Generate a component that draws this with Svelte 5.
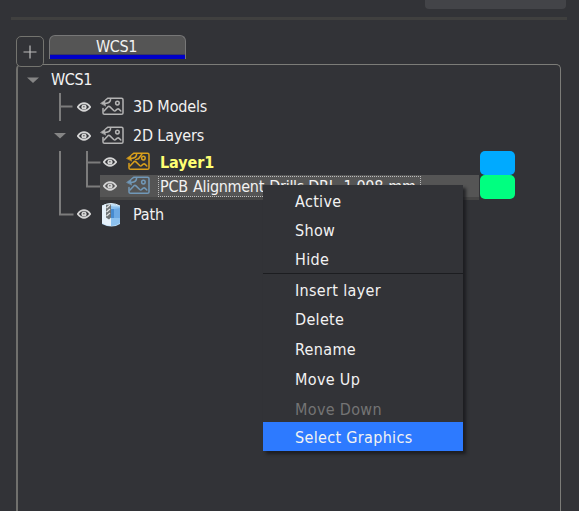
<script>
  const rows = [
    { label: 'WCS1', kind: 'root', h: 27 },
    { label: '3D Models', kind: 'branch', icon: 'image', tint: '#b4b4b4', h: 28, line: 'M32.5 0V28M33.5 13.5H45' },
    { label: '2D Layers', kind: 'branch', icon: 'image', tint: '#b4b4b4', h: 30, arrow: true },
    { label: 'Layer1', kind: 'leaf', icon: 'image', tint: '#daa01c', h: 24, color: '#00aaff', active: true, line: 'M32.5 0V24M59.5 0V24M60.5 11.5H73' },
    { label: 'PCB Alignment Drills.DRL_1.008 mm', kind: 'leaf', icon: 'image', tint: '#7198b8', h: 25, color: '#00ff80', selected: true, line: 'M32.5 0V25M59.5 0V11.5H73' },
    { label: 'Path', kind: 'branch', icon: 'path', h: 29, line: 'M32.5 0V14.5H46' }
  ];
  const menu = [
    { label: 'Active', h: 29 },
    { label: 'Show', h: 29 },
    { label: 'Hide', h: 28, end: true, low: true },
    { label: 'Insert layer', h: 29 },
    { label: 'Delete', h: 30 },
    { label: 'Rename', h: 30 },
    { label: 'Move Up', h: 30 },
    { label: 'Move Down', h: 27, disabled: true, low: true },
    { label: 'Select Graphics', h: 29, hover: true, low: true }
  ];
</script>

<main>
  <header><div class="field"></div></header>
  <div class="rule"></div>
  <nav>
    <button class="add" aria-label="Add"><svg width="14" height="14" viewBox="0 0 14 14"><path d="M7 .5v13M.5 7h13" stroke="#bcbcbc" stroke-width="1.2" /></svg></button>
    <div class="tab"><span>WCS1</span></div>
  </nav>
  <section>
    {#each rows as r}
      <div class="row {r.kind}" class:active={r.active} class:selected={r.selected} style:height="{r.h}px">
        <svg class="guide" viewBox="0 0 {r.kind === 'leaf' ? 73 : r.kind === 'root' ? 33 : 47} {r.h}" width={r.kind === 'leaf' ? 73 : r.kind === 'root' ? 33 : 47} height={r.h}>
          {#if r.line}<path d={r.line} transform="translate(9.5 0)" fill="none" stroke="#7c7c7c" stroke-width="2" />{/if}
          {#if r.kind === 'root'}<path d="M9 11.5h12l-6 5.5z" fill="#858585" />{/if}
          {#if r.arrow}<path d="M36 12h12l-6 5.5z" fill="#858585" />{/if}
        </svg>
        <div class="content">
          {#if r.kind !== 'root'}
            <svg class="eye" width="14" height="10" viewBox="0 0 14 10"><path d="M.7 5Q3.5 1.2 7 1.2T13.3 5Q10.5 8.8 7 8.8T.7 5z" fill="none" stroke="#d5d5d5" stroke-width="1.7" /><circle cx="7" cy="5" r="2.6" fill="#d5d5d5" /><circle cx="6.9" cy="4.8" r=".8" fill="#555" /></svg>
          {/if}
          {#if r.icon === 'image'}
            <svg class="icon" width="25" height="20" viewBox="0 0 25 20" fill="none" stroke={r.tint} stroke-width="1.5" stroke-linejoin="round" stroke-linecap="round">
              <path d="M5.5 3L8 1.2H21.5Q23 1.2 23 2.7V16Q23 17.3 21.5 17.3H4.5Q3 17.3 3 16V11.5" />
              <path d="M10.6 1.8Q10.8 6.2 5.2 6.5" />
              <path d="M.8 6.2L5 3.3Q4.6 6 5.5 8.8z" fill={r.tint} stroke-width=".6" />
              <path d="M4 14L8 9.7Q9 8.9 10 9.9L13.7 13.5Q14.8 14.4 15.7 13.4L17.2 12.2Q18.2 11.4 19.2 12.4L20.8 14" />
              <circle cx="17.4" cy="6.1" r="1.8" />
              {#if r.active}<path d="M15.8 2.2L12.5 6.8L9.8 7.6" />{/if}
            </svg>
          {:else if r.icon === 'path'}
            <svg class="icon" width="25" height="26" viewBox="0 0 25 26">
              <path d="M2 4Q11-1 20 4V22Q12 27 2 22z" fill="#b9dcf8" />
              <path d="M2 4Q6 1 11 2V24Q6 24 2 21z" fill="#e6f1fa" />
              <path d="M11 4V24Q16 24 20 21V4Q17 5 11 4z" fill="#8cc1ef" />
              <path d="M11 7h3v9h-3z" fill="#478bd0" />
              <path d="M14 7l6-1v10h-6z" fill="#6ca9e4" />
              <path d="M6 2.5h5v13l-2 2-3-2z" fill="#6d7376" />
              <path d="M6.5 6l3.5-3M6.5 10l3.5-3M6.5 14l3.5-3" stroke="#e0e2e2" stroke-width="1.2" />
              <path d="M2 4Q11-1 20 4" fill="none" stroke="#deeffa" />
            </svg>
          {/if}
          <span class="label">{r.label}</span>
        </div>
        {#if r.color}<i style:background={r.color}></i>{/if}
      </div>
    {/each}
  </section>
  <div class="menu">
    {#each menu as m}
      <div class="item" class:disabled={m.disabled} class:hover={m.hover} class:low={m.low} style:height="{m.h}px"><span>{m.label}</span></div>
      {#if m.end}<hr />{/if}
    {/each}
  </div>
</main>

<style>
  :global(body) { margin: 0; background: #323337; }
  main { position: relative; width: 579px; height: 511px; overflow: hidden; box-sizing: border-box; background: #323337; color: #f2f2f2; font: 16px/20px "DejaVu Sans Condensed", "DejaVu Sans", sans-serif; font-stretch: condensed; display: flex; flex-direction: column; }
  header { height: 17px; flex: none; padding-left: 425px; }
  .field { width: 141px; height: 9px; background: #434448; border-radius: 0 0 4px 4px; }
  .rule { height: 3px; flex: none; margin: 0 12px 0 11px; background: #40403f; }
  nav { height: 44px; flex: none; display: flex; align-items: flex-start; gap: 5px; padding: 15px 0 0 16px; box-sizing: border-box; position: relative; z-index: 1; }
  .add { width: 28px; height: 31px; margin-top: 1px; padding: 0; border: 1px solid #74746f; border-radius: 5px; background: #323337; display: grid; place-items: center; box-sizing: border-box; }
  .tab { box-sizing: border-box; width: 137px; height: 24px; border: 1px solid #777; border-bottom: 0; border-radius: 6px 6px 0 0; background: linear-gradient(#555 18px, #3a3a60 18px, #3a3a60 19px, #0000c8 19px, #0000c8 23px); text-align: center; letter-spacing: -.4px; }
  .tab span { display: block; margin: 1px 2px 0 0; }
  section { box-sizing: border-box; flex: 1; margin: 0 18px 0 16px; padding-top: 1px; border: 1px solid #7c7c78; border-left: 2px solid #70706d; border-bottom: 0; border-radius: 5px 5px 0 0; }
  .row { display: flex; align-items: center; position: relative; letter-spacing: -.15px; white-space: nowrap; }
  .guide { flex: none; overflow: visible; }
  .content { display: flex; align-items: center; height: 100%; }
  .row.branch .guide { margin-right: 12px; }
  .row.branch .eye { margin-bottom: 1px; }
  .row.leaf .guide { margin-right: 9px; }
  .row.leaf .eye { margin-left: 3px; }
  .row.leaf .icon { margin-right: 9px; }
  .root { letter-spacing: -.4px; }
  .eye { margin-right: 9px; flex: none; }
  .icon { margin-right: 8px; flex: none; }
  .active .content { height: 22px; margin-bottom: 2px; }
  .selected .content { box-sizing: border-box; width: 379px; height: 25px; padding-bottom: 3px; background: linear-gradient(#555 22px, #464646 22px); }
  .active .label { color: #ffff73; font-weight: bold; letter-spacing: -.1px; padding-top: 1px; }
  .selected .label { outline: 1px dotted #bbb; outline-offset: 1px; height: 17px; line-height: 17px; letter-spacing: -.3px; word-spacing: 1px; padding-right: 2px; min-width: 259px; box-sizing: border-box; }
  .row i { position: absolute; left: 462px; top: 0; width: 35px; height: 24px; border-radius: 5px; }
  .menu { position: absolute; z-index: 2; left: 263px; top: 185px; width: 200px; height: 266px; padding-top: 2px; box-sizing: border-box; background: #323337; box-shadow: 3px 3px 3px #17181ccc; }
  .item { display: flex; align-items: center; padding-left: 32px; box-sizing: border-box; letter-spacing: .33px; }
  .low { padding-top: 2px; }
  .menu hr { height: 1px; margin: 0 0 2px; border: 0; background: #1c1d20; }
  .disabled { color: #747474; }
  .hover { background: #2d7aff; }
</style>
